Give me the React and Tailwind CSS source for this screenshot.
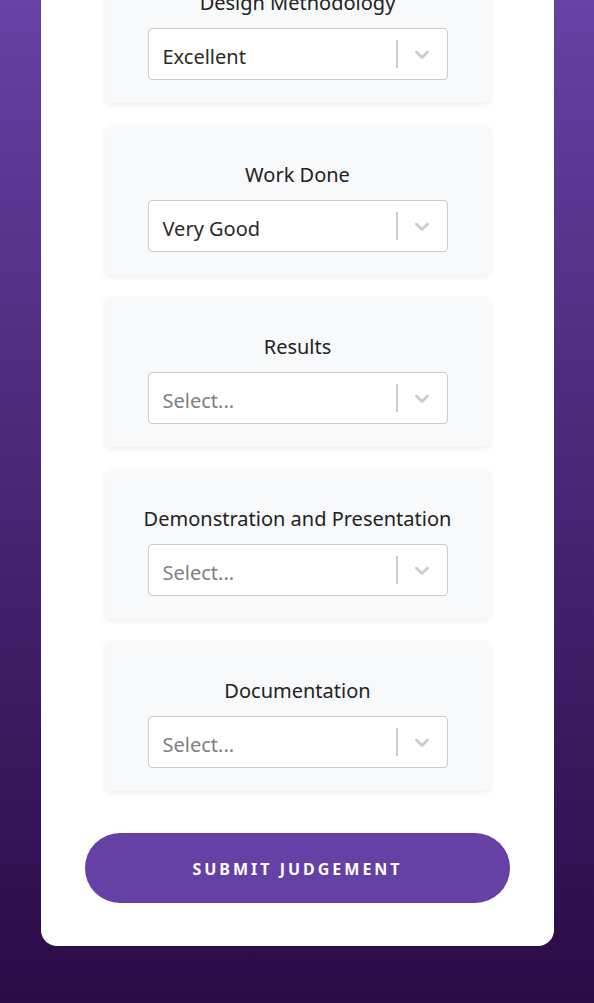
import React from 'react';

const criteria = [
  { label: 'Design Methodology', value: 'Excellent' },
  { label: 'Work Done', value: 'Very Good' },
  { label: 'Results', value: '' },
  { label: 'Demonstration and Presentation', value: '' },
  { label: 'Documentation', value: '' },
];

const Chevron = () => (
  <svg width="24" height="24" viewBox="0 0 20 20" fill="#cccccc">
    <path d="M4.516 7.548c0.436-0.446 1.043-0.481 1.576 0l3.908 3.747 3.908-3.747c0.533-0.481 1.141-0.446 1.574 0 0.436 0.445 0.408 1.197 0 1.615-0.406 0.418-4.695 4.502-4.695 4.502-0.217 0.223-0.502 0.335-0.787 0.335s-0.57-0.112-0.789-0.335c0 0-4.287-4.084-4.695-4.502s-0.436-1.17 0-1.615z" />
  </svg>
);

const SelectBox = ({ value }) => (
  <div className="w-[300px] h-[52px] bg-white border border-[#cccccc] rounded-[4px] flex items-center">
    <div className={`flex-1 pl-[14px] pt-[5px] text-[20px] ${value ? 'text-[#2a2a2a]' : 'text-[#808080]'}`}>
      {value || 'Select...'}
    </div>
    <span className="w-[2px] h-[28px] bg-[#cccccc]" />
    <div className="pl-[12px] pr-[13px] flex items-center">
      <Chevron />
    </div>
  </div>
);

const CriterionCard = ({ label, value }) => (
  <div className="mx-[20px] h-[150px] bg-[#f8f9fa] rounded-md shadow-[0_2px_6px_rgba(0,0,0,0.08)] flex flex-col items-center pt-[35px]">
    <div className="text-[20px] leading-[30px] text-[#222222] mb-[10px]">{label}</div>
    <SelectBox value={value} />
  </div>
);

export default function App() {
  return (
    <div
      className="min-h-[1003px] bg-gradient-to-b from-[#6741a4] to-[#2c0a46] pl-[41px] pr-[40px] pb-[57px] overflow-hidden"
      style={{ fontFamily: '"Noto Sans", "Open Sans", sans-serif' }}
    >
      <div className="-mt-[100px] bg-white rounded-2xl pt-[53px] pb-[43px] px-[44px]">
        <div className="flex flex-col gap-[22px]">
          {criteria.map((c) => (
            <CriterionCard key={c.label} label={c.label} value={c.value} />
          ))}
        </div>
        <button className="mt-[42px] w-full h-[70px] rounded-full bg-[#6541a5] text-white font-bold text-[16px] tracking-[3px] uppercase pt-[2px]">
          Submit Judgement
        </button>
      </div>
    </div>
  );
}
